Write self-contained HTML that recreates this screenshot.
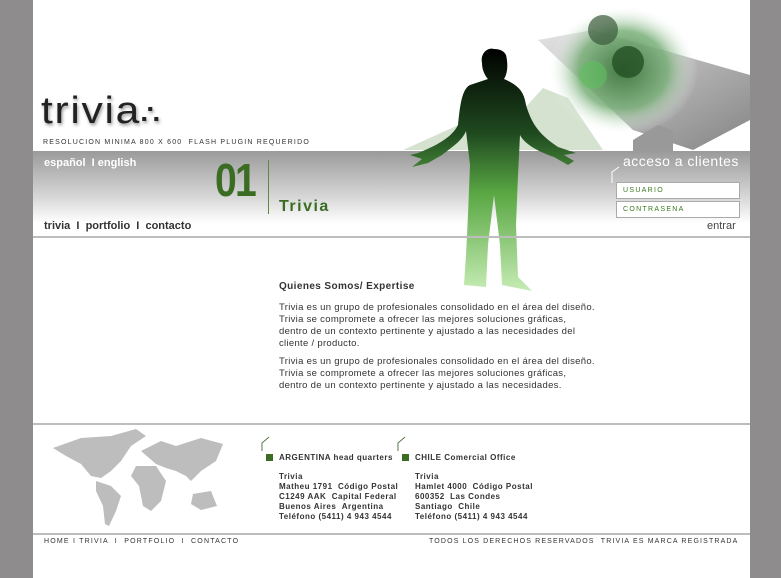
<!DOCTYPE html>
<html><head><meta charset="utf-8"><style>
*{margin:0;padding:0}
body{width:781px;height:578px;background:#8e8c8d;position:relative;overflow:hidden;font-family:"Liberation Sans",sans-serif}
#page{position:absolute;left:33px;top:0;width:717px;height:578px;background:#fff;overflow:hidden}
.a{position:absolute;white-space:nowrap}
.band{position:absolute;left:0;top:151px;width:717px;height:85px;background:linear-gradient(#9a9a9a,#d8d8d8 55%,#fff 85%,#fff)}
.hl{position:absolute;left:0;width:717px;height:2px;background:#bdbdbd}
.tiny{font-size:7px;letter-spacing:1.2px;color:#333}
.nav{font-size:11px;font-weight:bold;color:#333}
.body{font-size:9.5px;color:#333;line-height:12px;letter-spacing:.3px}
.addr{font-size:8px;font-weight:bold;color:#333;line-height:10px;letter-spacing:.5px}
.inp{position:absolute;left:583px;width:122px;height:15px;border:1px solid #aaa;background:#fff;font-size:7px;letter-spacing:1.3px;color:#3a7a1e;line-height:15px;text-indent:6px}
</style></head><body>
<div id="page">
<svg class="a" style="left:360px;top:0" width="357" height="151">
<defs><radialGradient id="g1" cx="50%" cy="50%" r="50%"><stop offset="0" stop-color="#2f6e2f"/><stop offset=".6" stop-color="#7ab07a"/><stop offset="1" stop-color="#fff" stop-opacity="0"/></radialGradient>
<linearGradient id="bar" x1="0" y1="0" x2="1" y2="1"><stop offset="0" stop-color="#ddd"/><stop offset="1" stop-color="#666"/></linearGradient></defs>
<polygon points="10,150 110,105 130,110 150,88 175,98 210,150" fill="#d4e2cf"/>
<polygon points="145,40 200,30 357,75 357,120 300,150 240,130" fill="url(#bar)" opacity=".8"/>
<ellipse cx="230" cy="70" rx="75" ry="65" fill="url(#g1)" opacity=".85"/>
<circle cx="210" cy="30" r="15" fill="#3a5a3a" opacity=".7"/>
<circle cx="235" cy="62" r="16" fill="#245024" opacity=".8"/>
<circle cx="200" cy="75" r="14" fill="#5fbf5f" opacity=".6"/>
<polygon points="240,140 265,125 280,130 280,151 240,151" fill="#999"/>
</svg>
<div class="band"></div>
<svg class="a" style="left:375px;top:45px" width="170" height="248">
<defs><linearGradient id="fig" x1="0" y1="0" x2="0" y2="1"><stop offset="0" stop-color="#000"/><stop offset=".35" stop-color="#1f4a1f"/><stop offset=".6" stop-color="#5aa844"/><stop offset="1" stop-color="#c6ecb4"/></linearGradient></defs>
<path d="M86,4 C80,2 72,8 74,18 C74,26 78,32 80,34 L62,40 C54,44 52,60 50,80 C44,92 30,100 10,108 L2,110 L14,114 L4,122 L20,118 L34,110 C44,102 54,96 58,86 L62,120 L60,170 L58,210 L56,240 L78,242 L80,200 L86,150 L92,200 L94,240 L124,246 L110,232 L108,180 L110,130 L112,90 C116,98 128,106 146,112 L160,120 L166,116 L156,110 L168,108 L150,102 C132,90 124,80 118,60 C116,46 110,40 96,34 C100,28 100,18 98,10 C96,6 92,4 86,4 Z" fill="url(#fig)"/>
</svg>
<div class="a" style="left:8px;top:92px;font-size:38px;letter-spacing:1.5px;color:#222;font-weight:normal;text-shadow:1px 2px 3px #999;line-height:38px;transform:scaleX(1.12);transform-origin:left">trivia<span style="font-size:26px;font-weight:bold">∴</span></div>
<div class="a tiny" style="left:10px;top:139px">RESOLUCION MINIMA 800 X 600 &nbsp;FLASH PLUGIN REQUERIDO</div>
<div class="a nav" style="left:11px;top:157px;color:#fff">español &nbsp;I english</div>
<div class="a" style="left:182px;top:155px;font-size:46px;font-weight:bold;color:#3a6d23;line-height:50px;letter-spacing:-2px;transform:scaleX(.85);transform-origin:left">01</div>
<div class="a" style="left:235px;top:160px;width:1px;height:54px;background:#5a8a3a"></div>
<div class="a" style="left:246px;top:198px;font-size:16px;font-weight:bold;color:#3a6d23;letter-spacing:1.5px">Trivia</div>
<div class="a nav" style="left:11px;top:220px">trivia &nbsp;I &nbsp;portfolio &nbsp;I &nbsp;contacto</div>
<div class="a" style="left:590px;top:153px;font-size:14px;color:#fff;letter-spacing:.5px">acceso a clientes</div>
<svg class="a" style="left:578px;top:166px" width="10" height="18"><path d="M1,17 V6 L8,1" stroke="#fff" fill="none"/></svg>
<div class="inp" style="top:182px">USUARIO</div>
<div class="inp" style="top:201px">CONTRASENA</div>
<div class="a nav" style="left:674px;top:220px;color:#444;font-weight:normal">entrar</div>
<div class="hl" style="top:236px"></div>
<div class="a" style="left:246px;top:281px;font-size:10px;font-weight:bold;color:#333;letter-spacing:.4px">Quienes Somos/ Expertise</div>
<div class="a body" style="left:246px;top:302px">Trivia es un grupo de profesionales consolidado en el área del diseño.<br>Trivia se compromete a ofrecer las mejores soluciones gráficas,<br>dentro de un contexto pertinente y ajustado a las necesidades del<br>cliente / producto.</div>
<div class="a body" style="left:246px;top:356px">Trivia es un grupo de profesionales consolidado en el área del diseño.<br>Trivia se compromete a ofrecer las mejores soluciones gráficas,<br>dentro de un contexto pertinente y ajustado a las necesidades.</div>
<div class="hl" style="top:423px"></div>
<svg class="a" style="left:18px;top:426px" width="175" height="104"><g fill="#bdbdbd">
<path d="M2,22 L30,12 L60,10 L85,3 L95,10 L80,20 L70,35 L60,45 L50,52 L40,50 L30,38 L15,30 Z"/>
<path d="M45,55 L60,60 L70,70 L65,85 L58,100 L54,98 L52,80 L45,65 Z"/>
<path d="M90,25 L110,15 L125,20 L150,12 L172,18 L165,35 L150,45 L140,55 L135,50 L125,45 L115,42 L105,38 Z"/>
<path d="M85,40 L105,40 L115,55 L110,75 L100,85 L92,80 L88,60 L80,50 Z"/>
<path d="M142,68 L160,65 L166,80 L150,84 L140,78 Z"/>
</g></svg>
<svg class="a" style="left:228px;top:436px" width="10" height="16"><path d="M1,15 V7 L8,1" stroke="#5a7a4a" fill="none"/></svg>
<svg class="a" style="left:364px;top:436px" width="10" height="16"><path d="M1,15 V7 L8,1" stroke="#5a7a4a" fill="none"/></svg>
<div class="a" style="left:233px;top:454px;width:7px;height:7px;background:#3a6d23"></div>
<div class="a" style="left:369px;top:454px;width:7px;height:7px;background:#3a6d23"></div>
<div class="a addr" style="left:246px;top:453px">ARGENTINA head quarters</div>
<div class="a addr" style="left:382px;top:453px">CHILE Comercial Office</div>
<div class="a addr" style="left:246px;top:472px">Trivia<br>Matheu 1791 &nbsp;Código Postal<br>C1249 AAK &nbsp;Capital Federal<br>Buenos Aires &nbsp;Argentina<br>Teléfono (5411) 4 943 4544</div>
<div class="a addr" style="left:382px;top:472px">Trivia<br>Hamlet 4000 &nbsp;Código Postal<br>600352 &nbsp;Las Condes<br>Santiago &nbsp;Chile<br>Teléfono (5411) 4 943 4544</div>
<div class="hl" style="top:533px"></div>
<div class="a tiny" style="left:11px;top:538px;letter-spacing:1.2px">HOME I TRIVIA &nbsp;I &nbsp;PORTFOLIO &nbsp;I &nbsp;CONTACTO</div>
<div class="a tiny" style="left:396px;top:538px;letter-spacing:1.15px">TODOS LOS DERECHOS RESERVADOS &nbsp;TRIVIA ES MARCA REGISTRADA</div>
</div>
</body></html>
